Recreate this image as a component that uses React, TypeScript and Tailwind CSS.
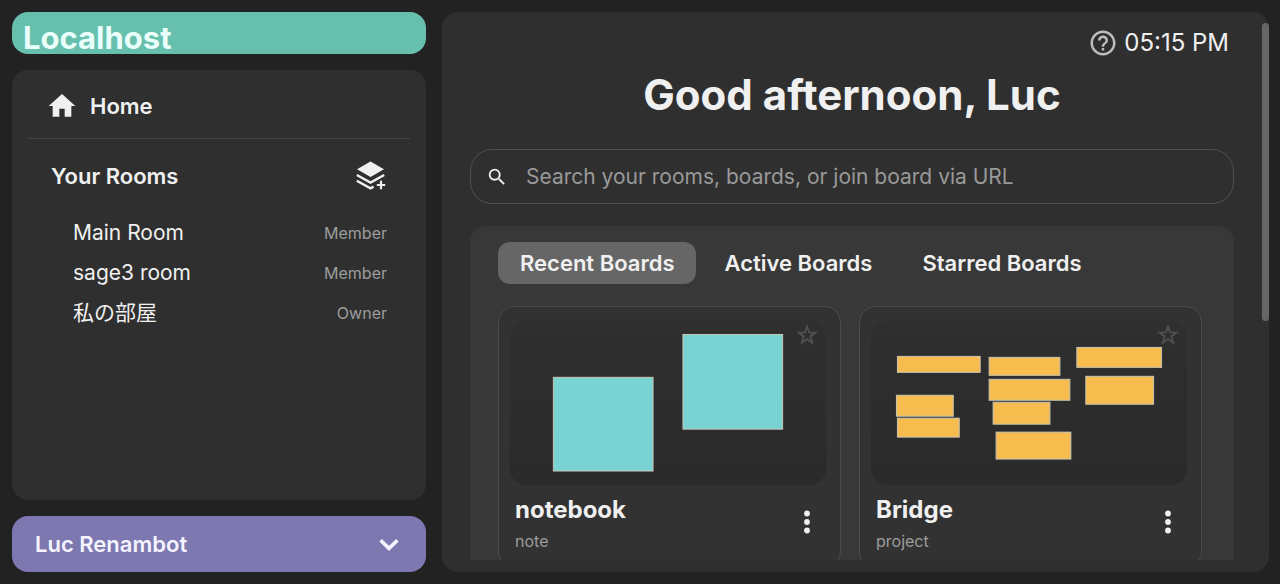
import { MdHome, MdSearch, MdHelpOutline } from "react-icons/md";

const rooms = [
  { name: "Main Room", role: "Member" },
  { name: "sage3 room", role: "Member" },
  { name: "私の部屋", role: "Owner" },
];

const tabs = ["Recent Boards", "Active Boards", "Starred Boards"];

type Rect = [x: number, y: number, width: number, height: number];

type Board = { name: string; description: string; color: string; apps: Rect[] };

const boards: Board[] = [
  {
    name: "notebook",
    description: "note",
    color: "#79d3d3",
    apps: [
      [43, 56, 101, 95],
      [173, 13, 101, 96],
    ],
  },
  {
    name: "Bridge",
    description: "project",
    color: "#f6bc4e",
    apps: [
      [26, 35, 84, 17],
      [118, 36, 72, 19],
      [206, 26, 86, 21],
      [118, 58, 82, 22],
      [215, 55, 69, 29],
      [25, 74, 58, 22],
      [122, 81, 58, 23],
      [26, 97, 63, 20],
      [125, 111, 76, 28],
    ],
  },
];

function LayersPlusIcon() {
  return (
    <svg width="34" height="34" viewBox="0 0 34 34" fill="none" stroke="currentColor" strokeWidth="2.4" aria-hidden="true">
      <path d="M16.5 2.4 30 10.2 16.5 18 3 10.2Z" fill="currentColor" stroke="none" />
      <path d="M2.8 16 16.5 23.6 30.2 16" />
      <path d="M2.8 21.8 16.5 29.4 19.6 27.6" />
      <path d="M27 21.8V30.2M22.8 26H31.2" strokeWidth="2.2" />
    </svg>
  );
}

function ChevronDownIcon() {
  return (
    <svg width="34" height="34" viewBox="0 0 34 34" fill="none" stroke="currentColor" strokeWidth="3.6" aria-hidden="true">
      <path d="M8.6 13.2 17 21.4 25.4 13.2" />
    </svg>
  );
}

function StarIcon() {
  return (
    <svg width="24" height="24" viewBox="0 0 24 24" fill="none" stroke="currentColor" strokeWidth="1.9" aria-hidden="true">
      <path d="M12 3.6 14.1 9.4 20.3 9.6 15.4 13.4 17.2 19.8 12 16.2 6.8 19.8 8.6 13.4 3.7 9.6 9.9 9.4Z" />
    </svg>
  );
}

function BoardCard({ board }: { board: Board }) {
  return (
    <article className="rounded-2xl border border-[#4b4b4b] bg-[#323232] pt-[14px] pr-[14px] pb-3 pl-[11px]">
      <div className="relative rounded-2xl bg-linear-to-b from-[#2f2f2f] to-[#2a2a2a]">
        <svg viewBox="0 0 317 165" className="block w-full" aria-hidden="true">
          {board.apps.map(([x, y, width, height]) => (
            <rect
              key={`${x}-${y}`}
              x={x + 0.5}
              y={y + 0.5}
              width={width - 1}
              height={height - 1}
              fill={board.color}
              stroke="#c9c5b4"
              strokeWidth="1"
            />
          ))}
        </svg>
        <button aria-label={`Star ${board.name}`} className="absolute top-0.5 right-[7px] text-[#505050]">
          <StarIcon />
        </button>
      </div>
      <div className="flex items-start justify-between pt-2 pl-[5px]">
        <div>
          <h2 className="text-2xl leading-[34px] font-bold">{board.name}</h2>
          <p className="text-base leading-7 text-[#9c9c9c]">{board.description}</p>
        </div>
        <button aria-label={`Options for ${board.name}`} className="mt-[17px] mr-[7px] flex w-6 justify-center">
          <svg width="8" height="24" viewBox="0 0 8 24" fill="currentColor" aria-hidden="true">
            <circle cx="4" cy="3.5" r="2.9" />
            <circle cx="4" cy="12" r="2.9" />
            <circle cx="4" cy="20.5" r="2.9" />
          </svg>
        </button>
      </div>
    </article>
  );
}

export default function App() {
  return (
    <div className="flex h-screen gap-4 overflow-hidden bg-[#222222] py-3 pr-[11px] pl-3 font-['Inter','Noto_Sans_CJK_JP',sans-serif] text-[#f0f0f0]">
      <aside className="flex w-[414px] shrink-0 flex-col gap-4">
        <header className="flex h-[42px] items-end rounded-2xl bg-[#67bfae] px-[11px] text-[#eafffb]">
          <h1 className="text-[31px] leading-8 font-bold">Localhost</h1>
        </header>

        <nav className="flex flex-1 flex-col rounded-2xl bg-[#2f2f2f] px-4">
          <a href="#home" className="flex h-[69px] items-center gap-3 border-b border-[#444444] pt-1 pl-[18px] text-[22px] font-semibold">
            <MdHome size={32} />
            Home
          </a>
          <div className="flex h-[74px] items-center justify-between pr-[22px] pl-[23px]">
            <h2 className="text-[22px] font-semibold">Your Rooms</h2>
            <button aria-label="Create room">
              <LayersPlusIcon />
            </button>
          </div>
          <ul>
            {rooms.map((room) => (
              <li key={room.name}>
                <a href="#room" className="flex h-10 items-center justify-between pr-[23px] pl-[45px]">
                  <span className="text-[21px]">{room.name}</span>
                  <span className="text-base text-[#9c9c9c]">{room.role}</span>
                </a>
              </li>
            ))}
          </ul>
        </nav>

        <button className="flex h-14 items-center justify-between rounded-2xl bg-[#7d79b0] pr-5 pl-[23px] text-[22px] font-semibold text-[#f4f3ff]">
          Luc Renambot
          <ChevronDownIcon />
        </button>
      </aside>

      <main className="relative min-w-0 flex-1 rounded-2xl bg-[#2f2f2f] pt-3 pr-[35px] pb-3 pl-7">
        <div className="h-full overflow-hidden">
          <div className="flex h-[38px] items-center justify-end gap-[6px] pr-[5px] text-2xl">
            <button aria-label="Help" className="text-[#bdbdbd]">
              <MdHelpOutline size={30} />
            </button>
            <time>05:15 PM</time>
          </div>
          <h1 className="text-center text-[42px] leading-[66px] font-bold">Good afternoon, Luc</h1>

          <label className="mt-[21px] flex h-[55px] items-center gap-[18px] rounded-[22px] border border-[#505050] pl-[15px]">
            <MdSearch size={22} className="shrink-0" />
            <input
              type="search"
              aria-label="Search"
              placeholder="Search your rooms, boards, or join board via URL"
              className="min-w-0 flex-1 bg-transparent text-[21px] outline-none placeholder:text-[#999999]"
            />
          </label>

          <section className="mt-[22px] rounded-2xl bg-[#383838] pt-4 pr-8 pb-8 pl-7">
            <div role="tablist" className="flex gap-[6px]">
              {tabs.map((tab, index) => (
                <button
                  key={tab}
                  role="tab"
                  aria-selected={index === 0}
                  className={
                    index === 0
                      ? "h-[42px] rounded-xl bg-[#666666] px-[22px] text-[22px] font-semibold"
                      : "h-[42px] rounded-xl px-[22px] text-[22px] font-semibold"
                  }
                >
                  {tab}
                </button>
              ))}
            </div>
            <div className="mt-[22px] grid grid-cols-2 gap-[18px]">
              {boards.map((board) => (
                <BoardCard key={board.name} board={board} />
              ))}
            </div>
          </section>
        </div>
        <div className="absolute top-[11px] right-0 h-[298px] w-[7px] rounded-full bg-[#666666]" />
      </main>
    </div>
  );
}
